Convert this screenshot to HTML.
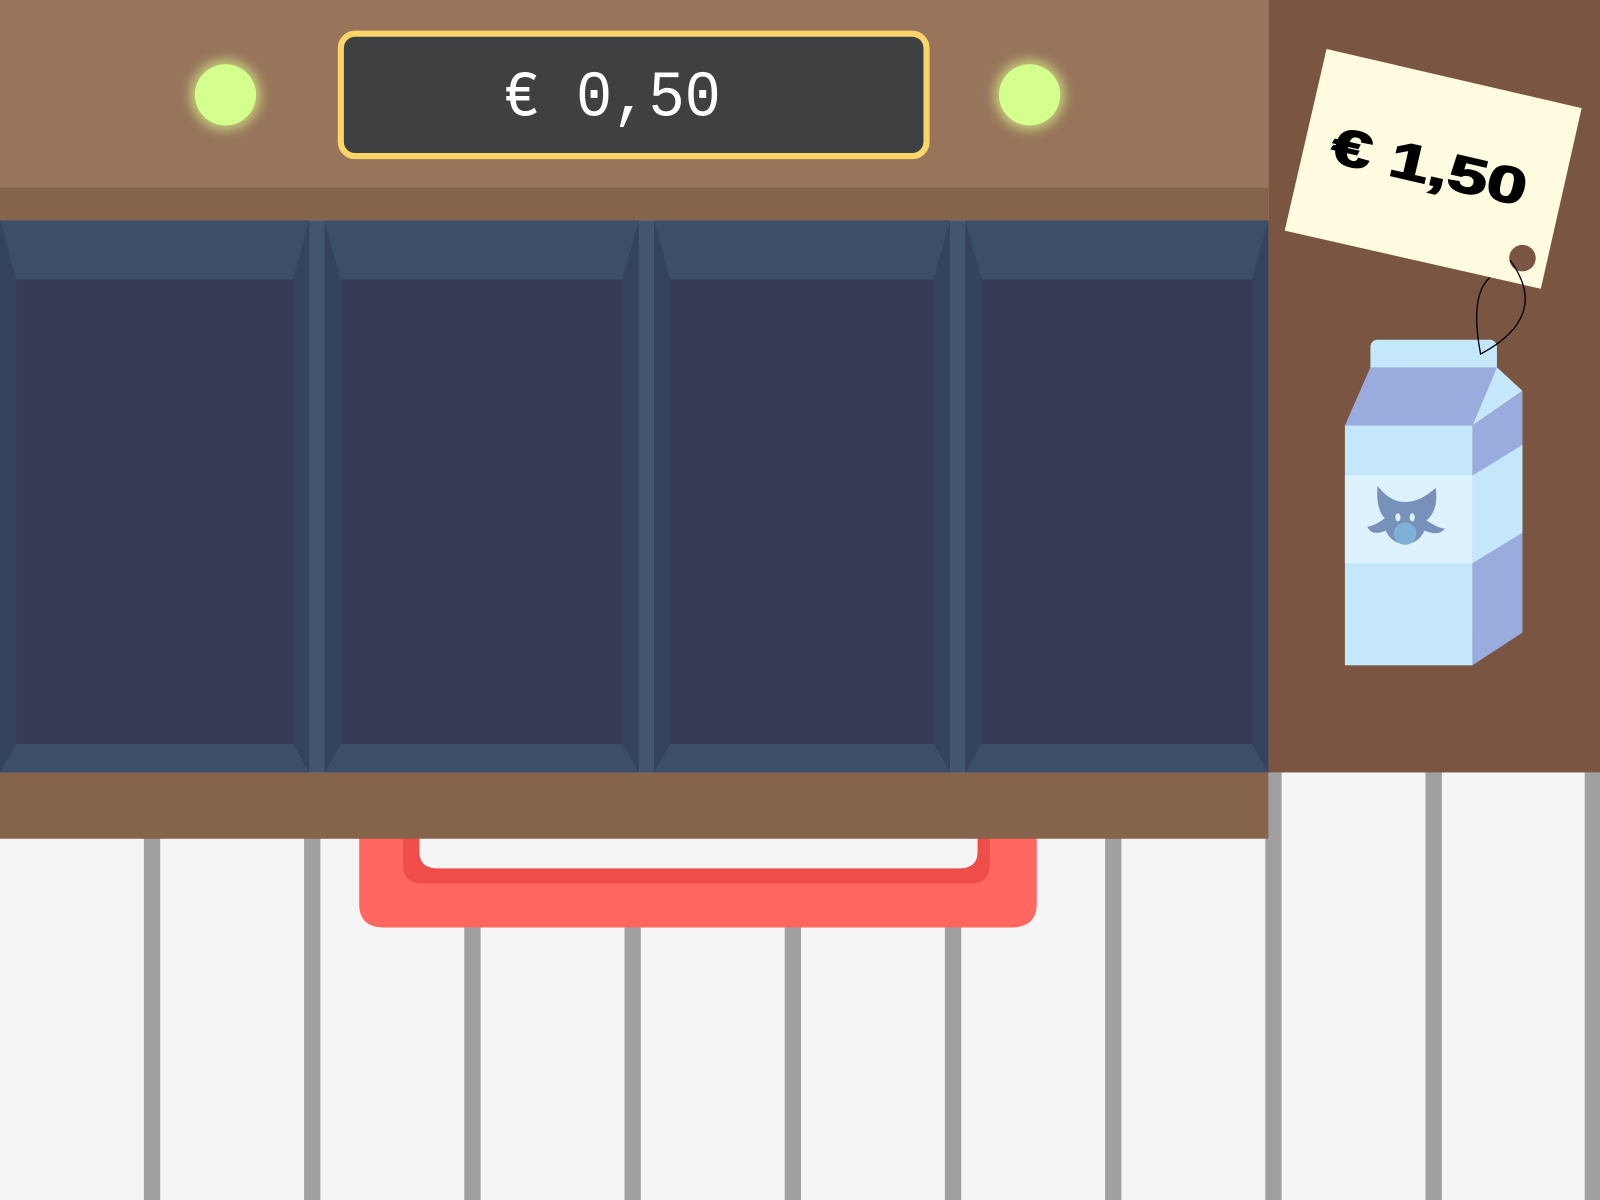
<!DOCTYPE html>
<html><head><meta charset="utf-8"><style>
html,body{margin:0;padding:0;width:1600px;height:1200px;overflow:hidden;background:#f5f5f5}
svg{display:block}
</style></head><body>
<svg width="1600" height="1200" viewBox="0 0 1568 1176" xmlns="http://www.w3.org/2000/svg">
<defs>
<filter id="glow" x="-1" y="-1" width="3" height="3"><feGaussianBlur stdDeviation="6"/></filter>
</defs>
<rect width="1568" height="1176" fill="#f5f5f5"/>
<g fill="#a0a0a0">
<rect x="141" y="757" width="16" height="419"/><rect x="298" y="757" width="16" height="419"/>
<rect x="455" y="757" width="16" height="419"/><rect x="612" y="757" width="16" height="419"/>
<rect x="769" y="757" width="16" height="419"/><rect x="926" y="757" width="16" height="419"/>
<rect x="1083" y="757" width="16" height="419"/><rect x="1240" y="757" width="16" height="419"/>
<rect x="1397" y="757" width="16" height="419"/><rect x="1553" y="757" width="16" height="419"/>
</g>
<path d="M352,740 H1016 V886 Q1016,909 990,909 H377 Q352,909 352,886 Z" fill="#ff675f"/>
<path d="M395,740 H970 V848 Q970,866 950,866 H415 Q395,866 395,848 Z" fill="#ef4d4a"/>
<path d="M411,740 H958 V835 Q958,851 940,851 H429 Q411,851 411,835 Z" fill="#f5f5f5"/>
<rect x="1243" y="0" width="325" height="757" fill="#7a5542"/>
<rect x="0" y="0" width="1243" height="185" fill="#97745a"/>
<rect x="0" y="184" width="1243" height="32" fill="#86644b"/>
<rect x="0" y="216" width="1243" height="541" fill="#42566f"/>
<g fill="#34435e">
<rect x="0" y="216" width="303" height="541"/>
<rect x="318" y="216" width="308" height="541"/>
<rect x="641" y="216" width="290" height="541"/>
<rect x="946" y="216" width="297" height="541"/>
</g>
<g fill="#3c4f69">
<polygon points="0,216 303,216 287,274 16,274"/><polygon points="0,757 303,757 287,729 16,729"/>
<polygon points="318,216 626,216 610,274 334,274"/><polygon points="318,757 626,757 610,729 334,729"/>
<polygon points="641,216 931,216 915,274 657,274"/><polygon points="641,757 931,757 915,729 657,729"/>
<polygon points="946,216 1243,216 1227,274 962,274"/><polygon points="946,757 1243,757 1227,729 962,729"/>
</g>
<g fill="#373b56">
<rect x="16" y="274" width="271" height="455"/>
<rect x="334" y="274" width="276" height="455"/>
<rect x="657" y="274" width="258" height="455"/>
<rect x="962" y="274" width="265" height="455"/>
</g>
<rect x="0" y="757" width="1243" height="65" fill="#86634b"/>
<circle cx="221" cy="93" r="34" fill="#e0ff90" opacity="0.7" filter="url(#glow)"/>
<circle cx="1009" cy="93" r="34" fill="#e0ff90" opacity="0.7" filter="url(#glow)"/>
<circle cx="221" cy="93" r="30" fill="#d4ff8e"/>
<circle cx="1009" cy="93" r="30" fill="#d4ff8e"/>
<rect x="334" y="33" width="574" height="120" rx="14" fill="#3f4042" stroke="#fbd46a" stroke-width="6"/>
<text x="600" y="113" font-family="Liberation Mono, monospace" font-size="64" fill="#fff" text-anchor="middle" textLength="213" lengthAdjust="spacingAndGlyphs">€ 0,50</text>
<polygon points="1300,48 1550,106 1510,283 1259,226" fill="#fffbe0"/>
<circle cx="1492" cy="253" r="13" fill="#7a5542"/>
<text x="0" y="0" transform="translate(1302,158) rotate(13)" font-family="Liberation Sans, sans-serif" font-weight="bold" font-size="50" fill="#000" stroke="#000" stroke-width="1.5" textLength="195" lengthAdjust="spacingAndGlyphs">€ 1,50</text>
<rect x="1343" y="333" width="124" height="34" rx="7" fill="#c5e7fc"/>
<polygon points="1318,417 1343,360 1467,360 1443,417" fill="#9aabdd"/>
<polygon points="1467,360 1492,383 1443,417" fill="#c5e7fc"/>
<rect x="1318" y="417" width="125" height="235" fill="#c5e7fc"/>
<rect x="1318" y="466" width="125" height="86" fill="#def2fd"/>
<polygon points="1443,417 1492,383 1492,620 1443,652" fill="#9aabdd"/>
<polygon points="1443,466 1492,436 1492,522 1443,552" fill="#c5e7fc"/>
<g fill="#7891bb">
<path d="M1350,476 Q1362,492 1377,492 Q1392,492 1407,478 Q1410,500 1398,510 Q1410,518 1416,518 Q1410,526 1396,520 Q1390,533 1377,533 Q1364,533 1358,520 Q1344,526 1340,516 Q1346,516 1357,508 Q1348,498 1350,476 Z"/>
</g>
<circle cx="1377" cy="523" r="11" fill="#7fb1d6"/>
<ellipse cx="1370" cy="507" rx="2.5" ry="4" fill="#def2fd"/>
<ellipse cx="1384" cy="507" rx="2.5" ry="4" fill="#def2fd"/>
<path d="M1460,272 Q1440,290 1451,347 Q1520,310 1480,255" fill="none" stroke="#000" stroke-width="1.3"/>
</svg>
</body></html>
